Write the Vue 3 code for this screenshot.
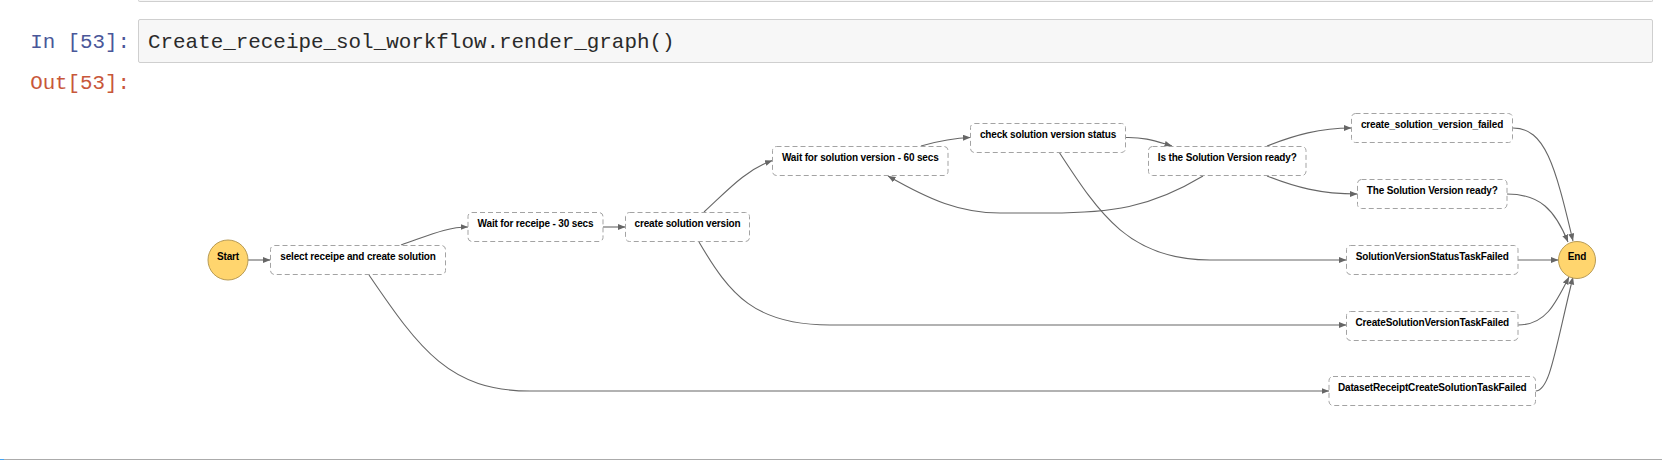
<script setup>
const boxes = [
  { label: 'select receipe and create solution', x: 270.5, y: 245, w: 175 },
  { label: 'Wait for receipe - 30 secs', x: 468, y: 212, w: 135 },
  { label: 'create solution version', x: 625.5, y: 212, w: 124 },
  { label: 'Wait for solution version - 60 secs', x: 772.5, y: 146, w: 175.5 },
  { label: 'check solution version status', x: 970.5, y: 123, w: 155 },
  { label: 'Is the Solution Version ready?', x: 1148.5, y: 146, w: 157.5 },
  { label: 'create_solution_version_failed', x: 1351.5, y: 113, w: 161 },
  { label: 'The Solution Version ready?', x: 1357.5, y: 179, w: 149.5 },
  { label: 'SolutionVersionStatusTaskFailed', x: 1346.5, y: 245, w: 171.5 },
  { label: 'CreateSolutionVersionTaskFailed', x: 1346.5, y: 311, w: 171.5 },
  { label: 'DatasetReceiptCreateSolutionTaskFailed', x: 1329, y: 376, w: 206.5 }
]
const circles = [
  { label: 'Start', cx: 228, cy: 260, r: 20 },
  { label: 'End', cx: 1577, cy: 260, r: 18.5 }
]
const edges = [
  'M248 260 L270.5 260',
  'M401 245 C430 235 447 227 468 227',
  'M603 227 L625.5 227',
  'M704 212 C726 192 745 170 772.5 160.5',
  'M369 275 C420 350 450 391 530 391 L1329 391',
  'M699 242 C730 295 755 325 830 325 L1346.5 325',
  'M921 146 C935 142 950 138 970.5 137.5',
  'M1125.5 137.5 C1145 137 1155 141 1172 146',
  'M1203 176 C1150 208 1110 213 1050 213 L1000 213 C960 213 930 200 888 176',
  'M1059 152 C1100 215 1130 260 1210 260 L1346.5 260',
  'M1267 146 C1295 135 1320 128 1351.5 128',
  'M1267 176 C1295 187 1320 194 1357.5 194',
  'M1513 128 C1545 128 1555 165 1573 241',
  'M1507 194 C1540 194 1555 210 1568 242',
  'M1518 260 L1558.5 260',
  'M1518 325 C1545 325 1555 305 1569 277',
  'M1535.5 391 C1550 391 1555 350 1573 277'
]
</script>

<template>
  <div class="page">
    <div class="prev-cell"></div>
    <div class="row input-row">
      <div class="prompt in">In [53]:</div>
      <div class="editor">Create_receipe_sol_workflow.render_graph()</div>
    </div>
    <div class="row output-row">
      <div class="prompt out">Out[53]:</div>
      <svg class="graph" width="1535" height="393" viewBox="138 66 1535 393">
        <defs>
          <marker id="arrow" markerUnits="userSpaceOnUse" markerWidth="9" markerHeight="8" refX="7.5" refY="3" orient="auto">
            <path d="M0 0 L7.5 3 L0 6 Z" fill="#666" />
          </marker>
        </defs>
        <path v-for="(d, i) in edges" :key="i" :d="d" class="edge" marker-end="url(#arrow)" />
        <g v-for="b in boxes" :key="b.label">
          <rect class="box" :x="b.x" :y="b.y + 0.5" :width="b.w" height="29" rx="4" ry="4" />
          <text class="label" :x="b.x + b.w / 2" :y="b.y + 15">{{ b.label }}</text>
        </g>
        <g v-for="c in circles" :key="c.label">
          <circle class="node" :cx="c.cx" :cy="c.cy" :r="c.r" />
          <text class="label" :x="c.cx" :y="c.cy">{{ c.label }}</text>
        </g>
      </svg>
    </div>
    <div class="next-cell"></div>
  </div>
</template>

<style scoped>
.page {
  width: 1673px;
  height: 460px;
  overflow: hidden;
  background: #fff;
  display: flex;
  flex-direction: column;
}
.prev-cell {
  height: 2px;
  margin: 0 20px 17px 138px;
  border: 1px solid #cfcfcf;
  border-top: 0;
  border-radius: 0 0 2px 2px;
  background: #f7f7f7;
  box-sizing: border-box;
}
.row {
  display: flex;
  align-items: flex-start;
}
.prompt {
  width: 130px;
  margin-right: 8px;
  flex: none;
  box-sizing: border-box;
  text-align: right;
  font: 20.8px/24px "Liberation Mono", monospace;
}
.in {
  color: #4a5799;
  padding-top: 12px;
}
.out {
  color: #c8573a;
  padding-top: 6px;
}
.editor {
  width: 1515px;
  height: 44px;
  box-sizing: border-box;
  padding: 11px 9px 9px;
  border: 1px solid #cfcfcf;
  border-radius: 2px;
  background: #f7f7f7;
  color: #2a2a2a;
  font: 20.9px/24px "Liberation Mono", monospace;
  white-space: pre;
}
.output-row {
  margin-top: 3px;
  height: 393px;
}
.graph {
  display: block;
  flex: none;
}
.edge {
  fill: none;
  stroke: #666;
  stroke-width: 1.1;
}
.box {
  fill: #fff;
  stroke: #a3a3a3;
  stroke-width: 1;
  stroke-dasharray: 5 3;
}
.node {
  fill: #ffd56e;
  stroke: #b89b55;
  stroke-width: 1;
}
.label {
  fill: #000;
  font: bold 10px "Liberation Sans", Arial, sans-serif;
  letter-spacing: -0.15px;
  text-anchor: middle;
}
.next-cell {
  height: 1px;
  background: #ababab;
  margin-right: 11px;
  border-left: 4px solid #42a5f5;
}
</style>
